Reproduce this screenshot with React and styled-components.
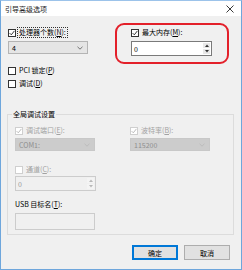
import styled, { createGlobalStyle } from "styled-components";

const GlobalStyle = createGlobalStyle`
  html, body {
    margin: 0;
    padding: 0;
    background: #ffffff;
  }
  * {
    box-sizing: border-box;
  }
`;

function CheckIcon({ color }) {
  return (
    <svg width="6" height="6" viewBox="0 0 6 6">
      <path d="M0.6 3.1 L2.3 4.8 L5.4 0.9" fill="none" stroke={color} strokeWidth="0.9" />
    </svg>
  );
}

function Chevron({ color }) {
  return (
    <svg width="6" height="4" viewBox="0 0 6 4">
      <path d="M0.5 0.8 L3 3.2 L5.5 0.8" fill="none" stroke={color} strokeWidth="0.8" />
    </svg>
  );
}

function Triangle({ up, color }) {
  return (
    <svg width="4" height="3" viewBox="0 0 4 3">
      <path d={up ? "M0 3 L2 0.5 L4 3 Z" : "M0 0 L2 2.5 L4 0 Z"} fill={color} />
    </svg>
  );
}

function Checkbox({ checked, disabled, focused, children }) {
  return (
    <CheckRow $disabled={disabled}>
      <Box $disabled={disabled}>
        {checked && <CheckIcon color={disabled ? "#b4b4b4" : "#222"} />}
      </Box>
      <LabelText $focused={focused}>{children}</LabelText>
    </CheckRow>
  );
}

function Combo({ value, disabled }) {
  return (
    <ComboBox $disabled={disabled}>
      <span>{value}</span>
      <Chevron color={disabled ? "#b8b8b8" : "#555"} />
    </ComboBox>
  );
}

function Spin({ value, disabled }) {
  const color = disabled ? "#b8b8b8" : "#333";
  return (
    <SpinBox $disabled={disabled}>
      <SpinValue>{value}</SpinValue>
      <SpinButtons $disabled={disabled}>
        <SpinButton $disabled={disabled}>
          <Triangle up color={color} />
        </SpinButton>
        <SpinButton $disabled={disabled}>
          <Triangle color={color} />
        </SpinButton>
      </SpinButtons>
    </SpinBox>
  );
}

export default function App() {
  return (
    <>
      <GlobalStyle />
      <Window>
        <TitleBar>
          <Title>引导高级选项</Title>
          <CloseButton>
            <svg width="8" height="8" viewBox="0 0 8 8">
              <path d="M0.5 0.5 L7.5 7.5 M7.5 0.5 L0.5 7.5" stroke="#222" strokeWidth="0.9" />
            </svg>
          </CloseButton>
        </TitleBar>
        <Body>
          <TopGrid>
            <LeftColumn>
              <Checkbox checked focused>
                处理器个数(<u>N</u>):
              </Checkbox>
              <Combo value="4" />
            </LeftColumn>
            <Highlight>
              <Checkbox checked>
                最大内存(<u>M</u>):
              </Checkbox>
              <Spin value="0" />
            </Highlight>
          </TopGrid>
          <Options>
            <Checkbox>
              PCI 锁定(<u>P</u>)
            </Checkbox>
            <Checkbox>
              调试(<u>D</u>)
            </Checkbox>
          </Options>
          <Group>
            <Legend>全局调试设置</Legend>
            <GroupGrid>
              <Field>
                <Checkbox checked disabled>
                  调试端口(<u>E</u>):
                </Checkbox>
                <Combo value="COM1:" disabled />
              </Field>
              <Field>
                <Checkbox checked disabled>
                  波特率(<u>B</u>):
                </Checkbox>
                <Combo value="115200" disabled />
              </Field>
            </GroupGrid>
            <ChannelField>
              <Checkbox disabled>
                通道(<u>C</u>):
              </Checkbox>
              <Spin value="0" disabled />
            </ChannelField>
            <UsbField>
              <PlainLabel>
                USB 目标名(<u>T</u>):
              </PlainLabel>
              <TextInput />
            </UsbField>
          </Group>
          <ButtonRow>
            <Button $primary>确定</Button>
            <Button>取消</Button>
          </ButtonRow>
        </Body>
      </Window>
    </>
  );
}

const Window = styled.div`
  width: 242px;
  height: 270px;
  display: flex;
  flex-direction: column;
  border: 1px solid #6ea6dc;
  border-top-color: #9cc3ea;
  font-family: "Noto Sans CJK SC", "Noto Sans", sans-serif;
  font-size: 7px;
  color: #000;
  overflow: hidden;
`;

const TitleBar = styled.div`
  height: 15px;
  flex: none;
  display: flex;
  align-items: center;
  justify-content: space-between;
  background: #ffffff;
  padding: 0 6px 0 4px;
`;

const Title = styled.span`
  font-size: 7px;
  color: #222;
`;

const CloseButton = styled.span`
  display: flex;
  align-items: center;
  margin-right: 1px;
`;

const Body = styled.div`
  flex: 1;
  display: flex;
  flex-direction: column;
  background: #f0f0f0;
  padding: 7px 7px 0 7px;
`;

const TopGrid = styled.div`
  display: grid;
  grid-template-columns: 80px 114px;
  column-gap: 27px;
  align-items: start;
`;

const LeftColumn = styled.div`
  display: flex;
  flex-direction: column;
  gap: 4px;
  padding-top: 5px;
`;

const Highlight = styled.div`
  display: flex;
  flex-direction: column;
  gap: 4px;
  height: 41px;
  border: 2px solid #e3202a;
  border-radius: 9px;
  padding: 3px 0 0 14px;
`;

const Options = styled.div`
  display: flex;
  flex-direction: column;
  gap: 4px;
  margin-top: 2px;
`;

const CheckRow = styled.div`
  display: flex;
  align-items: center;
  gap: 2px;
  height: 9px;
  line-height: 9px;
  white-space: nowrap;
  color: ${({ $disabled }) => ($disabled ? "#a2a2a2" : "#000")};
`;

const Box = styled.span`
  width: 8px;
  height: 8px;
  flex: none;
  display: flex;
  align-items: center;
  justify-content: center;
  background: #ffffff;
  border: 1px solid ${({ $disabled }) => ($disabled ? "#cfcfcf" : "#333")};
`;

const LabelText = styled.span`
  padding: 0 1px;
  outline: ${({ $focused }) => ($focused ? "1px dotted #333" : "none")};
`;

const ComboBox = styled.div`
  width: 80px;
  height: 13px;
  display: flex;
  align-items: center;
  justify-content: space-between;
  padding: 0 4px 0 3px;
  background: ${({ $disabled }) => ($disabled ? "#cccccc" : "#e5e5e5")};
  border: 1px solid ${({ $disabled }) => ($disabled ? "#c8c8c8" : "#b4b4b4")};
  color: ${({ $disabled }) => ($disabled ? "#8e8e8e" : "#000")};
`;

const SpinBox = styled.div`
  width: 81px;
  height: 15px;
  display: flex;
  align-items: stretch;
  background: ${({ $disabled }) => ($disabled ? "#f0f0f0" : "#ffffff")};
  border: 1px solid ${({ $disabled }) => ($disabled ? "#cccccc" : "#7a7a7a")};
  color: ${({ $disabled }) => ($disabled ? "#9a9a9a" : "#000")};
`;

const SpinValue = styled.span`
  flex: 1;
  display: flex;
  align-items: center;
  padding-left: 2px;
`;

const SpinButtons = styled.div`
  width: 9px;
  display: flex;
  flex-direction: column;
  gap: 1px;
  padding: 1px;
`;

const SpinButton = styled.span`
  flex: 1;
  display: flex;
  align-items: center;
  justify-content: center;
  background: ${({ $disabled }) => ($disabled ? "#f4f4f4" : "#e8e8e8")};
`;

const Group = styled.fieldset`
  margin: 22px 0 0 -1px;
  padding: 7px 8px 4px 7px;
  border: 1px solid #dcdcdc;
  min-width: 0;
`;

const Legend = styled.legend`
  padding: 0 1px;
  margin-left: -3px;
  font-size: 7px;
  line-height: 9px;
  color: #000;
`;

const GroupGrid = styled.div`
  display: grid;
  grid-template-columns: 80px 80px;
  column-gap: 35px;
`;

const Field = styled.div`
  display: flex;
  flex-direction: column;
  gap: 3px;
`;

const ChannelField = styled.div`
  display: flex;
  flex-direction: column;
  gap: 2px;
  margin-top: 14px;
`;

const UsbField = styled.div`
  display: flex;
  flex-direction: column;
  gap: 4px;
  margin-top: 9px;
`;

const PlainLabel = styled.span`
  height: 9px;
  line-height: 9px;
  white-space: nowrap;
`;

const TextInput = styled.div`
  width: 80px;
  height: 17px;
  background: #f0f0f0;
  border: 1px solid #cccccc;
`;

const ButtonRow = styled.div`
  display: flex;
  justify-content: flex-end;
  gap: 6px;
  margin-top: 10px;
  padding-right: 4px;
`;

const Button = styled.div`
  width: 46px;
  height: 15px;
  display: flex;
  align-items: center;
  justify-content: center;
  background: #e1e1e1;
  border: ${({ $primary }) => ($primary ? "1px solid #0078d7" : "1px solid #adadad")};
  box-shadow: ${({ $primary }) => ($primary ? "inset 0 0 0 1px #0078d7" : "none")};
`;
